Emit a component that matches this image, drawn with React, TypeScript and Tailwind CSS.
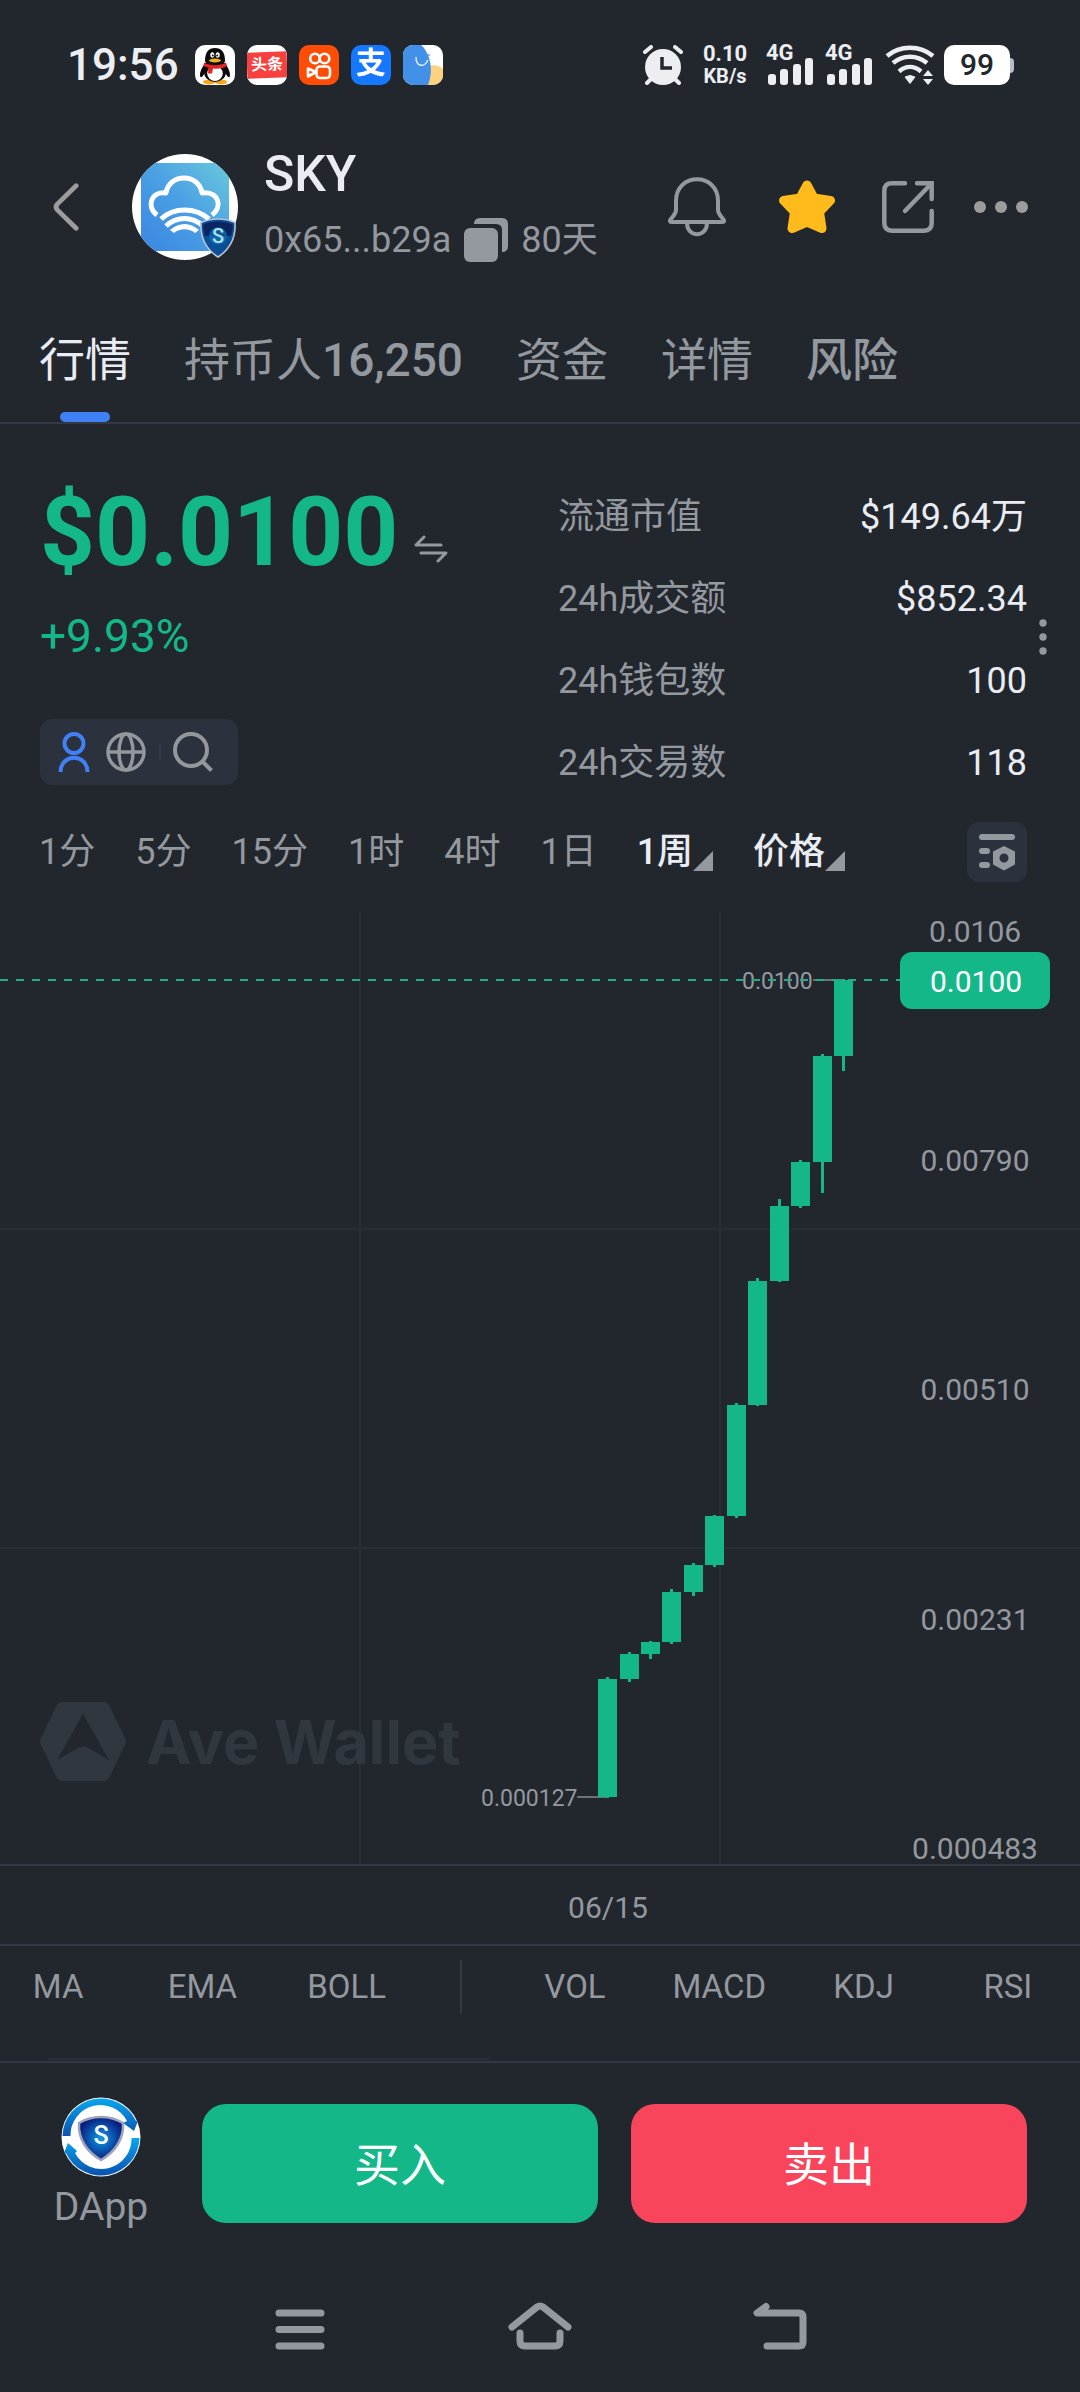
import React from "react";

const INK = "#94989f";

/* ---------- Status bar ---------- */

function QqIcon() {
  return (
    <svg viewBox="0 0 40 40" className="size-10">
      <rect width="40" height="40" rx="10" fill="#fff" />
      <ellipse cx="14" cy="37" rx="6" ry="2.500" fill="#f6a81c" />
      <ellipse cx="26" cy="37" rx="6" ry="2.500" fill="#f6a81c" />
      <path d="M10 18C6 24 4 29 5.500 32C7 33 8.500 30 9.500 28L30.500 28C31.500 30 33 33 34.500 32C36 29 34 24 30 18Z" fill="#0a0a0a" />
      <ellipse cx="20" cy="27" rx="11" ry="10" fill="#0a0a0a" />
      <ellipse cx="20" cy="28.500" rx="7.800" ry="7.500" fill="#fff" />
      <path d="M10 16C10 7 13.500 3 20 3S30 7 30 16C30 21 10 21 10 16Z" fill="#0a0a0a" />
      <path d="M9 17.500C15 21 25 21 31 17.500L32 21C27 24 22 24 18 23.500L17 28.500H13L13.500 22.500C11 22 9.500 21.500 8.500 21Z" fill="#e32324" />
      <ellipse cx="17.300" cy="10" rx="2" ry="2.800" fill="#fff" />
      <ellipse cx="22.700" cy="10" rx="2" ry="2.800" fill="#fff" />
      <circle cx="17.800" cy="10.400" r="1" fill="#111" />
      <circle cx="22.200" cy="10.400" r="1" fill="#111" />
      <ellipse cx="20" cy="15.500" rx="6" ry="1.900" fill="#f6b01c" />
    </svg>
  );
}

function ToutiaoIcon() {
  return (
    <span className="flex size-10 items-center overflow-hidden rounded-[10px] bg-white">
      <span className="flex h-[26px] w-full -rotate-2 items-center justify-center bg-[#f8403f] text-[16px] leading-none font-bold text-white">
        头条
      </span>
    </span>
  );
}

function KuaishouIcon() {
  return (
    <svg viewBox="0 0 40 40" className="size-10" fill="none" stroke="#fff" strokeWidth="2.600">
      <rect width="40" height="40" rx="10" fill="#ff4d06" stroke="none" />
      <circle cx="16" cy="13.500" r="4.800" />
      <circle cx="25.500" cy="13.500" r="4.800" />
      <rect x="17.500" y="21.500" width="13.500" height="11.500" rx="3.500" />
      <path d="M17 27L9 23.500V31.500Z" strokeLinejoin="round" />
    </svg>
  );
}

function AlipayIcon() {
  return (
    <span className="flex size-10 justify-center rounded-[10px] bg-[#1677ff] text-[30px] leading-[36px] font-bold text-white">
      支
    </span>
  );
}

function ElephantIcon() {
  return (
    <svg viewBox="0 0 40 40" className="size-10">
      <defs>
        <clipPath id="elephant">
          <rect width="40" height="40" rx="10" />
        </clipPath>
      </defs>
      <g clipPath="url(#elephant)">
        <rect width="40" height="40" fill="#fff" />
        <path d="M24 22C30 19 36 20 40 24V40H24Z" fill="#fbd280" />
        <path d="M0 0H18C27 8 31 24 25 40H0Z" fill="#4390e8" />
        <path d="M13 12C13 22 21 23 25 15" fill="none" stroke="#d9ecff" strokeWidth="1.500" />
        <circle cx="26" cy="10" r="1" fill="#8a9ab0" />
      </g>
    </svg>
  );
}

function SignalIcon() {
  return (
    <span className="flex h-10 w-[48px] flex-col">
      <span className="h-[16px] text-[22px] leading-[16px] font-bold">4G</span>
      <svg viewBox="0 0 48 27" className="-mt-[3px] h-[27px] w-[48px]" fill="#eceef2">
        <rect x="2" y="16" width="8" height="11" rx="3" />
        <rect x="14" y="11" width="8" height="16" rx="3" />
        <rect x="27" y="6" width="8" height="21" rx="3" />
        <rect x="39" y="0" width="8" height="27" rx="3" />
      </svg>
    </span>
  );
}

function StatusBar() {
  return (
    <div className="flex h-[130px] items-center justify-between pr-[66px] pl-[67px] text-[#eceef2]">
      <div className="flex items-center gap-3">
        <span className="mr-1 text-[44px] leading-none font-medium">19:56</span>
        <QqIcon />
        <ToutiaoIcon />
        <KuaishouIcon />
        <AlipayIcon />
        <ElephantIcon />
      </div>
      <div className="flex items-center">
        <svg viewBox="0 0 42 40" className="h-10 w-[42px]" fill="none" stroke="#eceef2" strokeLinecap="round">
          <path d="M3 7L9 2M39 7L33 2" strokeWidth="4" />
          <path d="M9 34L5 38M33 34L37 38" strokeWidth="4" />
          <circle cx="21" cy="22" r="18" fill="#eceef2" stroke="none" />
          <path d="M20 12V23H30" stroke="#22272e" strokeWidth="3.500" strokeLinecap="butt" />
        </svg>
        <span className="ml-4 flex w-[50px] flex-col items-center text-[22px] leading-[22px] font-bold">
          <span>0.10</span>
          <span className="text-[20px]">KB/s</span>
        </span>
        <span className="ml-4 flex gap-[11px]">
          <SignalIcon />
          <SignalIcon />
        </span>
        <svg viewBox="0 0 50 40" className="ml-3 h-10 w-[50px]" fill="none" stroke="#eceef2" strokeWidth="4.500">
          <path d="M2 11C15 0 35 0 48 11" />
          <path d="M8 18C18 9.500 32 9.500 42 18" />
          <path d="M14 26.500C21 20.500 29 20.500 36 26.500" />
          <path d="M20 32Q25 29 30 32L25 38.500Z" fill="#eceef2" strokeWidth="1" strokeLinejoin="round" />
          <path d="M38 31L43 25L48 31ZM38 34H48L43 40Z" fill="#eceef2" stroke="none" />
        </svg>
        <span className="ml-[9px] flex h-10 w-[66px] items-center justify-center rounded-[10px] bg-white text-[30px] leading-none font-medium text-[#22272e]">
          99
        </span>
        <span className="h-[15px] w-1 rounded-r-sm bg-[#b9bcc2]" />
      </div>
    </div>
  );
}

/* ---------- Header ---------- */

function ShieldMark() {
  return (
    <svg viewBox="0 0 36 40" className="absolute right-0.5 bottom-0.5 h-10 w-9">
      <path d="M18 1Q27 1 35 4.500C36 20 30 31 18 39C6 31 0 20 1 4.500Q9 1 18 1Z" fill="#0a4f96" stroke="#b9c3d2" strokeWidth="1.600" />
      <path d="M18 3.500Q26 3.500 32.500 6C33 10 32 15 31 18H5C4 15 3 10 3.500 6Q10 3.500 18 3.500Z" fill="#0a2560" />
      <circle cx="18" cy="18" r="9" fill="#0f6fb4" opacity=".7" />
      <text x="18" y="25" fontSize="20" fontWeight="500" fill="#a9e3ee" textAnchor="middle">S</text>
    </svg>
  );
}

function TokenAvatar() {
  return (
    <span className="relative ml-[53px] block size-[106px] shrink-0">
      <svg viewBox="0 0 106 106" className="size-full">
        <defs>
          <linearGradient id="sky" x1="0" y1="1" x2="1" y2="0">
            <stop offset="0" stopColor="#3a86e2" />
            <stop offset=".5" stopColor="#4a9fe4" />
            <stop offset="1" stopColor="#69c8dc" />
          </linearGradient>
          <clipPath id="disc">
            <circle cx="53" cy="53" r="53" />
          </clipPath>
        </defs>
        <g clipPath="url(#disc)">
          <rect width="106" height="106" fill="#fff" />
          <rect x="9" y="9" width="88" height="88" fill="url(#sky)" />
        </g>
        <g fill="none" stroke="#fff" strokeWidth="5">
          <path d="M25 61C14 53 19 37 34 39C37 19 67 19 70 39C87 37 91 53 80 61" strokeLinejoin="round" />
          <path d="M29 65C42 53 63 53 77 65" />
          <path d="M34 72C45 62 60 62 71 72" />
        </g>
        <path d="M38 76C47 68 58 68 67 76L63 79C57 74 48 74 42 79Z" fill="#fff" />
      </svg>
      <ShieldMark />
    </span>
  );
}

function Header() {
  return (
    <header className="flex h-[154px] items-center pr-[52px] pl-[52px]">
      <button aria-label="返回" className="shrink-0">
        <svg viewBox="0 0 28 50" className="h-[50px] w-[27px]" fill="none" stroke="#9c9c9c" strokeWidth="5" strokeLinecap="round" strokeLinejoin="round">
          <path d="M25 3L5.500 22Q3 25 5.500 28L25 47" />
        </svg>
      </button>
      <TokenAvatar />
      <div className="ml-[26px] flex flex-col gap-3.5">
        <h1 className="-mt-2 text-[50px] leading-[60px] font-medium text-[#eaecf4]">SKY</h1>
        <div className="flex items-center gap-[13px] text-[36px] leading-[44px]">
          <span>0x65...b29a</span>
          <button aria-label="复制地址">
            <svg viewBox="0 0 44 44" className="size-11" fill={INK}>
              <rect y="10" width="34" height="34" rx="6" />
              <path d="M10 6Q10 0 16 0H38Q44 0 44 6V28Q44 34 38 34V12Q38 6 32 6Z" />
            </svg>
          </button>
          <span>80天</span>
        </div>
      </div>
      <div className="ml-auto flex items-center">
        <button aria-label="提醒">
          <svg viewBox="0 0 58 60" className="h-[60px] w-[58px]" fill="none" stroke={INK} strokeWidth="4" strokeLinejoin="round">
            <path d="M8 24C8 -5 50 -5 50 24V33C50 37 53 39 55 42C57 44 56 45 54 45H4C2 45 1 44 3 42C5 39 8 37 8 33Z" />
            <path d="M19 46C19 61 39 61 39 46" />
          </svg>
        </button>
        <button aria-label="收藏" className="ml-[53px]">
          <svg viewBox="0 0 56 56" className="size-14" fill="#ffbb1b" stroke="#ffbb1b" strokeWidth="9" strokeLinejoin="round">
            <path d="M28 6L35 19L51.500 21.500L40.500 33L43 49.500L28 43L13 49.500L15.500 33L4.500 21.500L21 19Z" />
          </svg>
        </button>
        <button aria-label="分享" className="ml-[47px]">
          <svg viewBox="0 0 52 52" className="size-[52px]" fill="none" stroke={INK} strokeWidth="4.500" strokeLinecap="round">
            <path d="M23 2.300H10Q2.300 2.300 2.300 10V42Q2.300 49.700 10 49.700H42Q49.700 49.700 49.700 42V30" />
            <path d="M35 2.300H49.700V18" />
            <path d="M48 4L23 30" />
          </svg>
        </button>
        <button aria-label="更多" className="ml-[40px]">
          <svg viewBox="0 0 54 12" className="h-3 w-[54px]" fill="#9c9c9c">
            <circle cx="6" cy="6" r="6" />
            <circle cx="27" cy="6" r="6" />
            <circle cx="48" cy="6" r="6" />
          </svg>
        </button>
      </div>
    </header>
  );
}

/* ---------- Tabs ---------- */

function Tabs() {
  return (
    <nav className="flex h-[140px] gap-[53px] border-b-2 border-[#333845] pt-[46px] pl-[39px] text-[46px] leading-[60px]">
      <button className="flex flex-col items-center justify-between text-[#eaecf4]">
        行情
        <span className="h-[10px] w-[50px] rounded-[5px] bg-[#4080f6]" />
      </button>
      <button className="self-start">
        持币人<span className="font-medium">16,250</span>
      </button>
      <button className="self-start">资金</button>
      <button className="self-start">详情</button>
      <button className="self-start font-medium">风险</button>
    </nav>
  );
}

/* ---------- Price summary ---------- */

const stats = [
  { label: "流通市值", value: "$149.64万" },
  { label: "24h成交额", value: "$852.34" },
  { label: "24h钱包数", value: "100" },
  { label: "24h交易数", value: "118" },
];

function Summary() {
  return (
    <section className="relative flex justify-between pr-[53px] pl-10">
      <div className="pt-[60px]">
        <div className="flex items-center gap-4 text-[#14b888]">
          <span className="text-[96px] leading-[96px] font-bold">$0.0100</span>
          <button aria-label="切换单位" className="mt-[34px]">
            <svg viewBox="0 0 34 28" className="h-7 w-[34px]" fill="none" stroke={INK} strokeWidth="3" strokeLinecap="round" strokeLinejoin="round">
              <path d="M27 10H2L10 2M7 18H32L24 26" />
            </svg>
          </button>
        </div>
        <div className="mt-7 text-[46px] leading-[56px] text-[#14b888]">+9.93%</div>
        <div className="mt-[55px] flex h-[66px] w-[198px] items-center rounded-xl bg-[#2b313d] pl-[18px]">
          <button aria-label="持有人">
            <svg viewBox="0 0 32 40" className="h-10 w-8" fill="none" stroke="#4280f5" strokeWidth="4">
              <circle cx="16" cy="11.500" r="9.500" />
              <path d="M2.500 40C3 21 29 21 29.500 40" />
            </svg>
          </button>
          <button aria-label="官网" className="ml-4">
            <svg viewBox="0 0 40 40" className="size-10" fill="none" stroke="#94979c" strokeWidth="3.500">
              <circle cx="20" cy="20" r="18" />
              <ellipse cx="20" cy="20" rx="7" ry="18" />
              <path d="M2 20H38" />
            </svg>
          </button>
          <span className="ml-[13px] h-[18px] w-0.5 bg-[#323947]" />
          <button aria-label="搜索" className="ml-3">
            <svg viewBox="0 0 40 40" className="size-10" fill="none" stroke="#94979c" strokeWidth="4">
              <circle cx="18" cy="18" r="16" />
              <path d="M29 29L38.500 38.500" />
            </svg>
          </button>
        </div>
      </div>
      <dl className="w-[469px] pt-[52px] text-[36px] leading-[82px]">
        {stats.map((s) => (
          <div key={s.label} className="flex justify-between">
            <dt>{s.label}</dt>
            <dd className="text-[#eaecf4]">{s.value}</dd>
          </div>
        ))}
      </dl>
      <button aria-label="更多数据" className="absolute top-[195px] right-[33px]">
        <svg viewBox="0 0 8 36" className="h-9 w-2" fill={INK}>
          <circle cx="4" cy="4" r="3.700" />
          <circle cx="4" cy="18" r="3.700" />
          <circle cx="4" cy="32" r="3.700" />
        </svg>
      </button>
    </section>
  );
}

/* ---------- Interval bar ---------- */

const intervals = ["1分", "5分", "15分", "1时", "4时", "1日"];

function Dropdown({ label, options }: { label: string; options: string[] }) {
  return (
    <label className="flex items-center text-[#eaecf4]">
      <select aria-label={label} className="appearance-none bg-transparent font-medium [field-sizing:content]">
        {options.map((o) => (
          <option key={o}>{o}</option>
        ))}
      </select>
      <svg viewBox="0 0 20 20" className="mt-[18px] size-5" fill={INK}>
        <path d="M20 0V20H0Z" />
      </svg>
    </label>
  );
}

function IntervalBar() {
  return (
    <div className="flex h-[95px] items-center gap-10 pr-[53px] pl-[39px] text-[36px] leading-[48px]">
      {intervals.map((t) => (
        <button key={t}>{t}</button>
      ))}
      <Dropdown label="周期" options={["1周", "1月"]} />
      <Dropdown label="图表类型" options={["价格", "市值"]} />
      <button aria-label="图表设置" className="ml-auto flex size-[60px] items-center justify-center rounded-xl bg-[#2b313d]">
        <svg viewBox="0 0 36 38" className="h-[38px] w-9" fill={INK}>
          <rect y="1" width="36" height="6" rx="3" />
          <rect y="15" width="11" height="6" rx="3" />
          <rect y="29" width="11" height="6" rx="3" />
          <path fillRule="evenodd" d="M25 13L36 18.500V31.500L25 37.500L14 31.500V18.500ZM25 20.500A4.500 4.500 0 1 0 25 29.500A4.500 4.500 0 1 0 25 20.500Z" />
        </svg>
      </button>
    </div>
  );
}

/* ---------- Candlestick chart ---------- */

/* left edge, high, body top, body bottom, low */
const candles = [
  [598, 1677, 1679, 1797, 1798],
  [620, 1652, 1654, 1679, 1682],
  [641, 1641, 1642, 1654, 1659],
  [662, 1589, 1592, 1642, 1644],
  [684, 1563, 1565, 1592, 1596],
  [705, 1515, 1516, 1565, 1567],
  [727, 1403, 1405, 1516, 1518],
  [748, 1278, 1281, 1405, 1406],
  [770, 1199, 1206, 1281, 1282],
  [791, 1160, 1162, 1206, 1208],
  [813, 1054, 1056, 1162, 1193],
  [834, 979, 980, 1056, 1071],
];

const axis: [string, number][] = [
  ["0.0106", 932],
  ["0.00790", 1161],
  ["0.00510", 1390],
  ["0.00231", 1620],
  ["0.000483", 1849],
];

function Chart() {
  return (
    <svg viewBox="0 899 1080 1045" className="block w-full" fill={INK} fontSize="30">
      <g stroke="#282d36" strokeWidth="2">
        <path d="M360 911V1865M720 911V1865M0 1229H1080M0 1548H1080" />
      </g>
      <g fill="#31373f">
        <path fillRule="evenodd" d="M63 1702H103Q107 1702 109 1705L125 1738Q127 1741 125 1745L109 1778Q107 1781 103 1781H63Q59 1781 57 1778L41 1745Q39 1741 41 1738L57 1705Q59 1702 63 1702ZM83 1714L57 1760L76 1749Q83 1744 90 1749L109 1760Z" />
        <text x="146" y="1764" fontSize="61" fontWeight="700" className="font-[Inter]">Ave Wallet</text>
      </g>
      <path d="M0 1865H1080" stroke="#333845" strokeWidth="2" />
      <text x="742" y="989" fontSize="23">0.0100</text>
      <path d="M813 980H843M577 1797H607" stroke="#6d7178" strokeWidth="2" />
      <text x="481" y="1806" fontSize="23">0.000127</text>
      <g fill="#14b888">
        {candles.map(([x, high, top, bottom, low]) => (
          <g key={x}>
            <rect x={x} y={top} width="19" height={bottom - top} />
            <rect x={x + 8} y={high} width="3" height={low - high} />
          </g>
        ))}
      </g>
      <path d="M0 980H900" stroke="#2aa985" strokeWidth="2" strokeDasharray="8 8" />
      <g textAnchor="middle">
        {axis.map(([label, y]) => (
          <text key={label} x="975" y={y + 10}>{label}</text>
        ))}
        <rect x="900" y="952" width="150" height="57" rx="12" fill="#14b888" />
        <text x="976" y="992" fill="#fff">0.0100</text>
        <text x="608" y="1918">06/15</text>
      </g>
    </svg>
  );
}

/* ---------- Indicators ---------- */

function Indicators() {
  return (
    <div className="h-[117px] border-t-2 border-[#333845] text-[33px] leading-[81px]">
      <div className="-ml-3.5 flex items-center">
        <div className="grid flex-[3] grid-cols-3">
          <button>MA</button>
          <button>EMA</button>
          <button>BOLL</button>
        </div>
        <span className="mx-[41px] h-[54px] w-0.5 bg-[#333845]" />
        <div className="grid flex-[4] grid-cols-4">
          <button>VOL</button>
          <button>MACD</button>
          <button>KDJ</button>
          <button>RSI</button>
        </div>
      </div>
      <div className="mt-[31px] ml-12 h-0.5 w-[442px] bg-[#2a2f3a]" />
    </div>
  );
}

/* ---------- Bottom actions ---------- */

function DAppLogo() {
  return (
    <svg viewBox="0 0 80 80" className="size-20">
      <defs>
        <linearGradient id="ring" x1="0" y1="0" x2="0" y2="1">
          <stop offset="0" stopColor="#08a6ee" />
          <stop offset="1" stopColor="#0a52b0" />
        </linearGradient>
        <radialGradient id="shield">
          <stop offset="0" stopColor="#0d9be8" />
          <stop offset="1" stopColor="#0b1f80" />
        </radialGradient>
      </defs>
      <circle cx="40" cy="40" r="39.500" fill="#fff" />
      <path d="M1.500 39A38.500 38.500 0 0 1 75 24L77 24L73 34L62 26L66 24A30 30 0 0 0 9.500 39Z" fill="url(#ring)" />
      <path d="M78.500 41A38.500 38.500 0 0 1 5 56L3 56L7 46L16 54L14 56A30 30 0 0 0 70.500 41Z" fill="url(#ring)" />
      <path d="M40 20Q52 20 62 26C63 42 54 55 40 63C26 55 17 42 18 26Q28 20 40 20Z" fill="url(#shield)" stroke="#9da3b8" strokeWidth="2.500" />
      <text x="40" y="47" fontSize="25" fontWeight="500" fill="#fff" textAnchor="middle">S</text>
    </svg>
  );
}

function ActionBar() {
  return (
    <div className="flex h-[205px] items-start border-t-2 border-[#333845] pr-[53px]">
      <button className="flex w-[202px] shrink-0 flex-col items-center gap-1 pt-[34px] text-[39px] leading-[52px]">
        <DAppLogo />
        DApp
      </button>
      <div className="mt-[41px] flex flex-1 gap-[33px] text-[46px] text-white">
        <button className="h-[119px] flex-1 rounded-3xl bg-[#14b888] pt-1">买入</button>
        <button className="h-[119px] flex-1 rounded-3xl bg-[#f8455c] pt-1">卖出</button>
      </div>
    </div>
  );
}

function SystemNav() {
  return (
    <nav className="grid h-[126px] grid-cols-3 px-[180px] pb-1.5">
      <button aria-label="最近任务" className="flex items-center justify-center">
        <svg viewBox="0 0 64 48" className="h-12 w-16" stroke={INK} strokeWidth="7" strokeLinecap="round">
          <path d="M11 11H53M11 27.500H53M11 44H53" />
        </svg>
      </button>
      <button aria-label="主页" className="flex items-center justify-center">
        <svg viewBox="0 0 64 48" className="h-12 w-16" fill="none" stroke={INK} strokeWidth="7" strokeLinecap="round" strokeLinejoin="round">
          <path d="M4 25L29 5Q32 3 35 5L60 25" />
          <path d="M12 31V39Q12 44 17 44H47Q52 44 52 39V31" />
        </svg>
      </button>
      <button aria-label="返回上一页" className="flex items-center justify-center">
        <svg viewBox="0 0 64 48" className="h-12 w-16" fill="none" stroke={INK} strokeWidth="7" strokeLinecap="round" strokeLinejoin="round">
          <path d="M18 4.500L9 11H51Q55 11 55 15V40Q55 44 51 44H19" />
        </svg>
      </button>
    </nav>
  );
}

export default function App() {
  return (
    <div className="min-h-screen bg-[#22272e] font-[Roboto,'Noto_Sans_CJK_SC',sans-serif] text-[#94989f]">
      <StatusBar />
      <Header />
      <Tabs />
      <main>
        <Summary />
        <IntervalBar />
        <Chart />
        <Indicators />
      </main>
      <ActionBar />
      <SystemNav />
    </div>
  );
}
